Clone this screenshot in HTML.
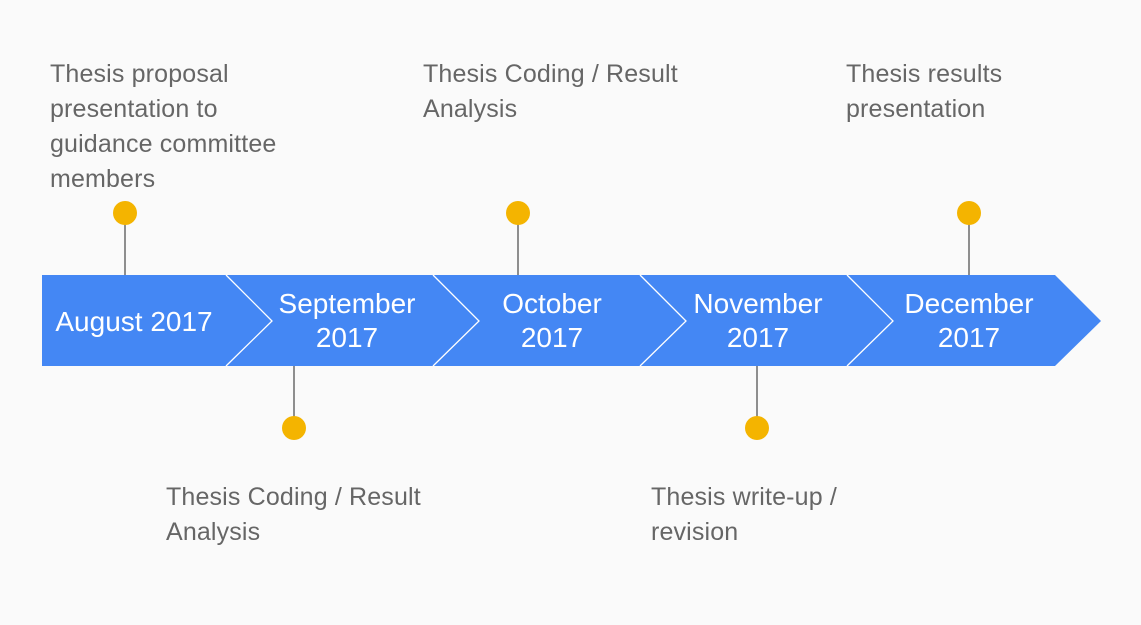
<!DOCTYPE html>
<html><head><style>html,body{margin:0;padding:0;background:#fafafa}svg{display:block}</style></head>
<body>
<svg width="1141" height="625" viewBox="0 0 1141 625" xmlns="http://www.w3.org/2000/svg" font-family="'Liberation Sans', sans-serif">
<rect width="1141" height="625" fill="#fafafa"/>
<polygon points="42,275 1055,275 1101,321 1055,366 42,366" fill="#4487f4"/>
<g stroke="#ffffff" stroke-width="1.3" fill="none">
<polyline points="226,275 272,321 226,366"/>
<polyline points="433,275 479,321 433,366"/>
<polyline points="640,275 686,321 640,366"/>
<polyline points="847,275 893,321 847,366"/>
</g>
<g stroke="#555" stroke-width="1.3">
<line x1="125" y1="213" x2="125" y2="275"/>
<line x1="518" y1="213" x2="518" y2="275"/>
<line x1="969" y1="213" x2="969" y2="275"/>
<line x1="294" y1="366" x2="294" y2="428"/>
<line x1="757" y1="366" x2="757" y2="428"/>
</g>
<g fill="#f4b400">
<circle cx="125" cy="213" r="12"/><circle cx="518" cy="213" r="12"/><circle cx="969" cy="213" r="12"/>
<circle cx="294" cy="428" r="12"/><circle cx="757" cy="428" r="12"/>
</g>
<g fill="#ffffff" font-size="28" text-anchor="middle">
<text x="134" y="331">August 2017</text>
<text x="347" y="313">September</text><text x="347" y="347">2017</text>
<text x="552" y="313">October</text><text x="552" y="347">2017</text>
<text x="758" y="313">November</text><text x="758" y="347">2017</text>
<text x="969" y="313">December</text><text x="969" y="347">2017</text>
</g>
<g fill="#666" font-size="25" letter-spacing="0.15">
<text x="50" y="82">Thesis proposal</text>
<text x="50" y="117">presentation to</text>
<text x="50" y="152">guidance committee</text>
<text x="50" y="187">members</text>
<text x="423" y="82">Thesis Coding / Result</text>
<text x="423" y="117">Analysis</text>
<text x="846" y="82">Thesis results</text>
<text x="846" y="117">presentation</text>
<text x="166" y="505">Thesis Coding / Result</text>
<text x="166" y="540">Analysis</text>
<text x="651" y="505">Thesis write-up /</text>
<text x="651" y="540">revision</text>
</g>
</svg>
</body></html>
